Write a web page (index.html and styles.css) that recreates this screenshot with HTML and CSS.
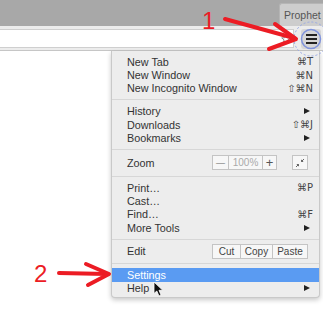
FILE: index.html
```html
<!DOCTYPE html>
<html lang="en">
<head>
    <meta charset="UTF-8">
    <title>Chrome menu</title>
    <link rel="stylesheet" href="styles.css">
</head>
<body>
    <div class="browser">
        <div class="tabstrip">
            <div class="tab">Prophet</div>
        </div>
        <div class="toolbar">
            <div class="omnibox">
                <svg class="star" width="10" height="10" viewBox="0 0 10 10">
                    <path d="M5 0.8 L6.2 3.7 L9.3 3.9 L6.9 5.9 L7.7 9 L5 7.3 L2.3 9 L3.1 5.9 L0.7 3.9 L3.8 3.7 Z" fill="none" stroke="#8a8a8a" stroke-width="1"/>
                </svg>
            </div>
            <div class="menu-btn">
                <span class="bar"></span>
                <span class="bar"></span>
                <span class="bar"></span>
            </div>
        </div>
        <div class="page"></div>

        <div class="menu">
            <div class="item"><span>New Tab</span><span class="key">⌘T</span></div>
            <div class="item"><span>New Window</span><span class="key">⌘N</span></div>
            <div class="item"><span>New Incognito Window</span><span class="key">⇧⌘N</span></div>
            <div class="sep"></div>
            <div class="item"><span>History</span><span class="sub"></span></div>
            <div class="item"><span>Downloads</span><span class="key">⇧⌘J</span></div>
            <div class="item"><span>Bookmarks</span><span class="sub"></span></div>
            <div class="sep"></div>
            <div class="item tall zoom-row">
                <span>Zoom</span>
                <div class="group">
                    <span class="btn minus">—</span>
                    <span class="btn pct">100%</span>
                    <span class="btn plus">+</span>
                </div>
                <span class="btn fs">
                    <svg width="10" height="10" viewBox="0 0 10 10">
                        <path d="M9 1 L6.5 3.5 M6.5 1.8 V3.5 H8.2" fill="none" stroke="#555" stroke-width="0.9"/>
                        <path d="M1 9 L3.5 6.5 M1.8 6.5 H3.5 V8.2" fill="none" stroke="#555" stroke-width="0.9"/>
                    </svg>
                </span>
            </div>
            <div class="sep"></div>
            <div class="item"><span>Print…</span><span class="key">⌘P</span></div>
            <div class="item"><span>Cast…</span></div>
            <div class="item"><span>Find…</span><span class="key">⌘F</span></div>
            <div class="item"><span>More Tools</span><span class="sub"></span></div>
            <div class="sep"></div>
            <div class="item tall edit-row">
                <span>Edit</span>
                <div class="group">
                    <span class="btn cut">Cut</span>
                    <span class="btn copy">Copy</span>
                    <span class="btn paste">Paste</span>
                </div>
            </div>
            <div class="sep"></div>
            <div class="item active"><span>Settings</span></div>
            <div class="item"><span>Help</span><span class="sub"></span></div>
        </div>

        <svg class="marks" width="323" height="316" viewBox="0 0 323 316">
            <circle cx="311" cy="39" r="17" fill="none" stroke="#98a9e6" stroke-width="1" stroke-dasharray="2 2"/>
            <circle cx="311" cy="39" r="9.5" fill="none" stroke="#7f93dc" stroke-width="1.5"/>
            <g stroke="#ec1c24" stroke-width="4" fill="none" stroke-linecap="round" stroke-linejoin="round">
                <path d="M225 19 L294 38"/>
                <path d="M275 24 L296 39 L269 49"/>
                <path d="M59 273 L107 274"/>
                <path d="M86 264 L109 274 L88 285"/>
            </g>
            <path d="M154 282 L154 293.5 L156.8 291 L159 296 L161 295 L159 290.3 L162.8 290.3 Z" fill="#111" stroke="#fff" stroke-width="0.8"/>
        </svg>
        <span class="num one">1</span>
        <span class="num two">2</span>
    </div>
</body>
</html>
```

FILE: styles.css
```css
* {
    margin: 0;
    padding: 0;
    box-sizing: border-box;
}

body {
    width: 323px;
    height: 316px;
    overflow: hidden;
    background: #fff;
    font-family: "Liberation Sans", Arial, sans-serif;
}

.browser {
    position: relative;
    width: 323px;
    height: 316px;
}

.tabstrip {
    height: 26px;
    background: #a8a8a8;
    display: flex;
    justify-content: flex-end;
    align-items: flex-end;
}

.tab {
    width: 44px;
    height: 23px;
    background: #cdcdcd;
    border: 1px solid #b5b5b5;
    border-bottom: none;
    border-right: none;
    border-radius: 3px 0 0 0;
    font-size: 10.5px;
    color: #555;
    line-height: 22px;
    padding-left: 4px;
}

.toolbar {
    height: 25px;
    background: #ececec;
    border-bottom: 1px solid #c6c6c6;
    display: flex;
    align-items: center;
    padding-top: 1px;
}

.omnibox {
    width: 294px;
    height: 19px;
    background: #fff;
    border: 1px solid #cfcfcf;
    border-left: none;
    display: flex;
    justify-content: flex-end;
    align-items: center;
    padding-right: 2px;
}

.star {
    display: block;
}

.menu-btn {
    width: 20px;
    height: 20px;
    margin-left: 7px;
    background: #d6d6d6;
    border-radius: 3px;
    display: flex;
    flex-direction: column;
    justify-content: center;
    align-items: center;
    gap: 2px;
}

.bar {
    width: 11px;
    height: 2px;
    background: #222;
}

.page {
    background: #fff;
}

.menu {
    position: absolute;
    left: 111px;
    top: 51px;
    width: 209px;
    height: 247px;
    background: #ededed;
    border: 1px solid #c9c9c9;
    border-top: none;
    border-radius: 0 0 4px 4px;
    box-shadow: 0 2px 5px rgba(0, 0, 0, 0.22);
    padding-top: 4px;
    font-size: 10.8px;
    color: #333;
}

.item {
    height: 13.4px;
    display: flex;
    align-items: center;
    padding: 0 6px 0 15px;
    white-space: nowrap;
}

.key {
    margin-left: auto;
    color: #444;
    font-family: "DejaVu Sans", "Liberation Sans", sans-serif;
    font-size: 10px;
}

.sub {
    margin-left: auto;
    margin-right: 3px;
    width: 0;
    height: 0;
    border-left: 6px solid #222;
    border-top: 3.5px solid transparent;
    border-bottom: 3.5px solid transparent;
}

.sep {
    height: 1px;
    background: #d7d7d7;
    margin: 4.25px 0;
}

.tall {
    padding-right: 11px;
}

.zoom-row {
    height: 17px;
}

.edit-row {
    height: 15px;
}

.group {
    margin-left: auto;
    display: flex;
    height: 15px;
    border: 1px solid #c4c4c4;
    background: #f7f7f7;
}

.btn {
    display: flex;
    justify-content: center;
    align-items: center;
    height: 100%;
    font-size: 10px;
    color: #444;
}

.group .btn + .btn {
    border-left: 1px solid #c4c4c4;
}

.minus {
    width: 15px;
    font-size: 9px;
    color: #666;
}

.pct {
    width: 34px;
    color: #aaa;
}

.plus {
    width: 14px;
    font-size: 13px;
    color: #555;
}

.fs {
    width: 16px;
    height: 15px;
    margin-left: 15px;
    border: 1px solid #c4c4c4;
    background: #f7f7f7;
}

.cut {
    width: 27px;
}

.copy {
    width: 32px;
}

.paste {
    width: 35px;
}

.active {
    background: #5a9bf2;
    color: #fff;
}

.marks {
    position: absolute;
    left: 0;
    top: 0;
    pointer-events: none;
}

.num {
    position: absolute;
    color: #ec1c24;
    font-size: 24px;
    line-height: 24px;
}

.one {
    left: 202px;
    top: 9px;
}

.two {
    left: 34px;
    top: 262px;
}
```
